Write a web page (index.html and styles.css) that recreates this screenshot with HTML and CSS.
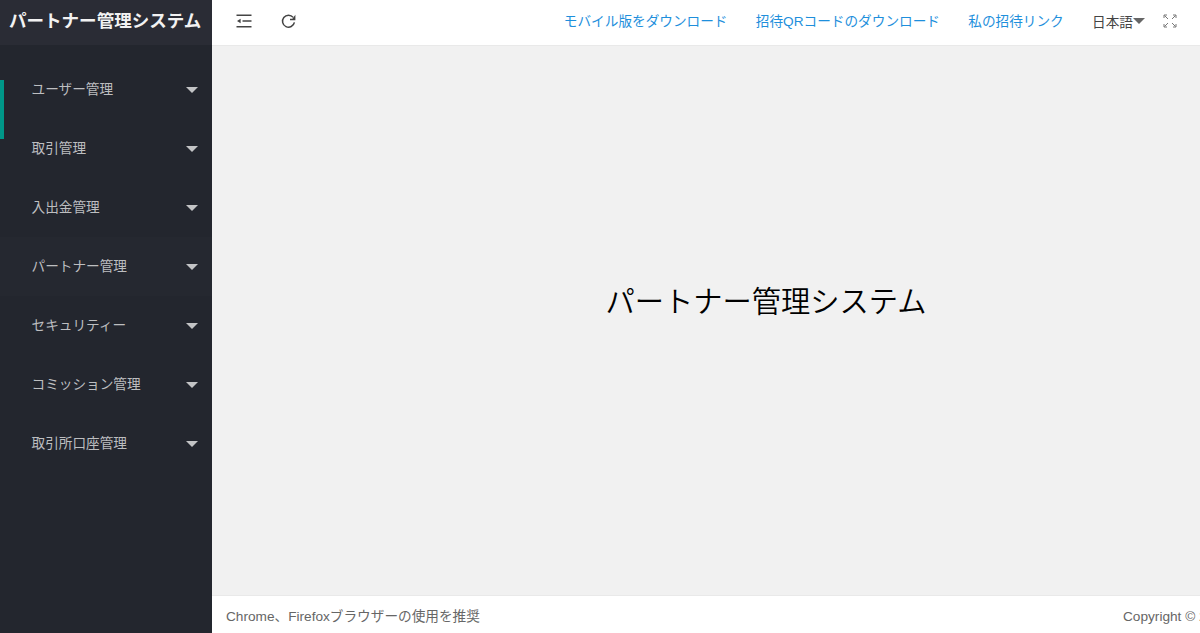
FILE: index.html
```
<!DOCTYPE html>
<html lang="ja">
<head>
<meta charset="utf-8">
<title>パートナー管理システム</title>
<link rel="stylesheet" href="styles.css">
</head>
<body>
<div class="app">
  <aside class="sidebar">
    <div class="logo">パートナー管理システム</div>
    <ul class="menu">
      <li class="item current"><span>ユーザー管理</span><i class="caret"></i></li>
      <li class="item"><span>取引管理</span><i class="caret"></i></li>
      <li class="item"><span>入出金管理</span><i class="caret"></i></li>
      <li class="item hovered"><span>パートナー管理</span><i class="caret"></i></li>
      <li class="item"><span>セキュリティー</span><i class="caret"></i></li>
      <li class="item"><span>コミッション管理</span><i class="caret"></i></li>
      <li class="item"><span>取引所口座管理</span><i class="caret"></i></li>
    </ul>
  </aside>
  <div class="main">
    <header class="topbar">
      <div class="tools">
        <svg class="icon" width="16" height="14" viewBox="0 0 16 14"><path d="M.5 1.200h15M6.500 7h9M.5 12.800h15" fill="none" stroke="#444" stroke-width="1.500"/><path d="M1 7l3.600-2.200v4.400z" fill="#444"/></svg>
        <svg class="icon" width="16" height="16" viewBox="0 0 16 16"><path d="M13.400 9.400A6 6 0 1 1 12.200 4.400" fill="none" stroke="#444" stroke-width="1.500"/><path d="M14.400 1.800v5.400H9V5.700h2.400z" fill="#444"/></svg>
      </div>
      <nav class="links">
        <a>モバイル版をダウンロード</a>
        <a>招待QRコードのダウンロード</a>
        <a>私の招待リンク</a>
        <span class="lang">日本語<i class="caret dark"></i></span>
        <svg class="full" width="14" height="14" viewBox="0 0 14 14"><path d="M1.500 1.500l3.500 3.500M12.500 1.500L9 5M1.500 12.500l3.500-3.500M12.500 12.500L9 9M1 4V1h3M10 1h3v3M1 10v3h3M10 13h3v-3" fill="none" stroke="#777" stroke-width="1"/></svg>
      </nav>
    </header>
    <main class="content"><h1>パートナー管理システム</h1></main>
    <footer class="footer"><span>Chrome、Firefoxブラウザーの使用を推奨</span><span class="copy">Copyright © 2</span></footer>
  </div>
</div>
</body>
</html>
```
FILE: styles.css
```
* { box-sizing: border-box; }
body {
  margin: 0;
  font: 13.65px "Liberation Sans", "Noto Sans CJK JP", sans-serif;
  overflow: hidden;
}
.app { display: flex; height: 633px; width: 1200px; }
.sidebar { width: 212px; background: #23262e; flex: none; }
.logo {
  height: 45px;
  padding-left: 9px;
  background: #2a2c35;
  color: #f2f2f2;
  font-size: 17.55px;
  font-weight: bold;
  line-height: 43px;
  white-space: nowrap;
}
.menu { list-style: none; margin: 15px 0 0; padding: 0; }
.item {
  height: 59.05px;
  padding: 0 14px 4px 31.5px;
  display: flex;
  align-items: center;
  justify-content: space-between;
  color: #bdbec0;
}
.current { background: linear-gradient(#009688, #009688) 0 100% / 4px 39px no-repeat; }
.current + .item { background: linear-gradient(#009688, #009688) 0 0 / 4px 20px no-repeat; }
.item.hovered { background: #252830; }
.caret {
  border: 6px solid transparent;
  border-top-color: #c3c4c6;
  border-bottom: 0;
  margin-top: 5px;
}
.topbar {
  height: 46px;
  border-bottom: 1px solid #e9e9e9;
  background: #fff;
  display: flex;
  justify-content: space-between;
  padding: 0 23px 3px 24px;
  align-items: center;
}
.main { flex: 1; min-width: 0; display: flex; flex-direction: column; }
.tools { display: flex; align-items: center; gap: 29px; }
.icon, .full { display: block; }
.links { display: flex; align-items: center; white-space: nowrap; }
.links a { color: #1e8fdc; margin: 0 28.3px 2px 0; }
.lang { display: flex; align-items: center; color: #444; margin: 0 18px 0 0; }
.dark { border-top-color: #666; margin-top: 0; }
.content { flex: 1; background: #f1f1f1; display: flex; justify-content: center; padding: 234px 0 0 120px; }
.content h1 { margin: 0; font-size: 29.25px; font-weight: 350; line-height: 44px; color: #000; white-space: nowrap; }
.footer {
  height: 38px;
  border-top: 1px solid #e9e9e9;
  background: #fff;
  color: #666;
  display: flex;
  justify-content: space-between;
  line-height: 41px;
  padding-left: 14px;
  white-space: nowrap;
}
.copy { width: 77px; }
```
